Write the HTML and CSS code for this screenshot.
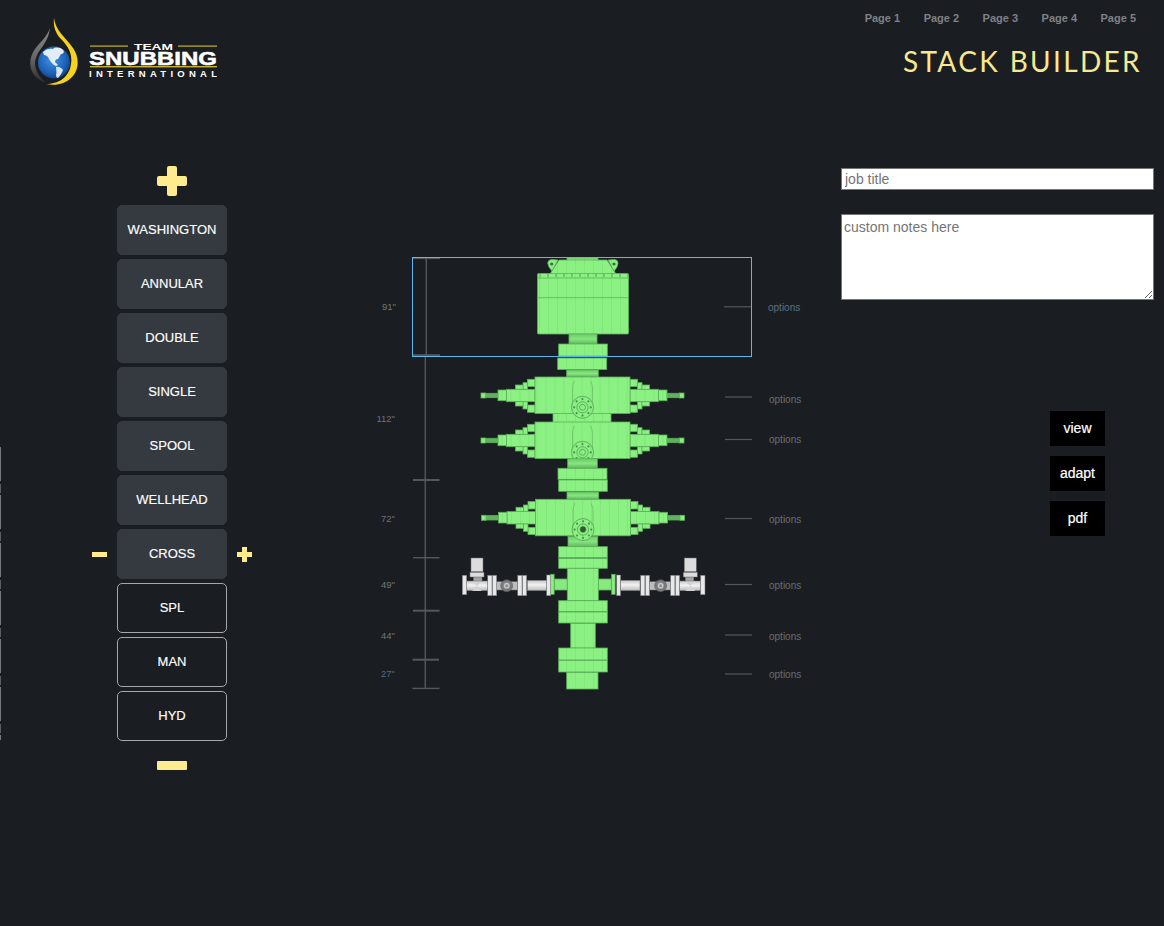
FILE: index.html
```html
<!DOCTYPE html>
<html lang="en">
<head>
<meta charset="utf-8">
<title>Stack Builder</title>
<link rel="stylesheet" href="styles.css">
</head>
<body>
<div class="edge"></div>
<header class="top">
  <svg class="logo" width="187" height="67" viewBox="30 18 187 67" role="img" aria-label="Team Snubbing International">
    <defs>
      <radialGradient id="globe" cx="0.45" cy="0.4" r="0.65">
        <stop offset="0" stop-color="#3f93e6"/>
        <stop offset="0.7" stop-color="#1b5fb4"/>
        <stop offset="1" stop-color="#0d3a78"/>
      </radialGradient>
      <linearGradient id="grayDrop" x1="0" y1="0" x2="0" y2="1">
        <stop offset="0" stop-color="#8a8a8a"/>
        <stop offset="0.55" stop-color="#666"/>
        <stop offset="1" stop-color="#2a2b2d"/>
      </linearGradient>
    </defs>
    <path d="M54 18C55 30 66 38 73 48C80 58 79 71 71 78C65 84 56 86 46 84C58 84 69 78 71 64C73 52 66 44 60 38C56 33 53 27 54 18Z" fill="#f6d21f"/>
    <path d="M50 28C47 37 40 42 35 49C28 59 29 71 36 77C39 80 43 82 47 83C41 79 36 73 35 64C35 57 39 51 43 46C46 41 49 36 50 28Z" fill="url(#grayDrop)"/>
    <circle cx="54" cy="62.5" r="16" fill="url(#globe)"/>
    <path d="M43 52C46 49 50 48 53 49C55 47 60 47 63 50C65 52 63 54 61 54C60 56 59 57 58 59C56 59 55 60 55 62C56 63 57 64 58 65L56 66C53 65 51 62 49 59C48 56 46 55 44 55Z" fill="#e4edf6"/>
    <path d="M56 67C58 66 62 68 63 70C62 73 60 76 58 78C57 78 56 77 56 75C57 72 56 70 56 67Z" fill="#d5e2f0"/>
    <rect x="90" y="45.5" width="38" height="1.2" fill="#c9b32c"/>
    <rect x="178" y="45.5" width="39" height="1.2" fill="#c9b32c"/>
    <rect x="90" y="66" width="127" height="1.4" fill="#c9b32c"/>
    <text class="logo-team" x="134" y="49.5" textLength="39" lengthAdjust="spacingAndGlyphs">TEAM</text>
    <text class="logo-snub" x="89" y="64.5" textLength="128" lengthAdjust="spacingAndGlyphs">SNUBBING</text>
    <text class="logo-intl" x="89" y="76.5" textLength="128">INTERNATIONAL</text>
  </svg>
  <div class="top-right">
    <nav class="pages">
      <a class="page-link">Page 1</a>
      <a class="page-link">Page 2</a>
      <a class="page-link">Page 3</a>
      <a class="page-link">Page 4</a>
      <a class="page-link">Page 5</a>
    </nav>
    <h1 class="title">STACK BUILDER</h1>
  </div>
</header>

<main class="main">
  <aside class="stack-menu">
    <svg class="icon-plus-lg" width="30" height="30" viewBox="0 0 30 30"><path d="M10 2a2 2 0 0 1 2-2h6a2 2 0 0 1 2 2v8h8a2 2 0 0 1 2 2v6a2 2 0 0 1-2 2h-8v8a2 2 0 0 1-2 2h-6a2 2 0 0 1-2-2v-8H2a2 2 0 0 1-2-2v-6a2 2 0 0 1 2-2h8Z"/></svg>
    <div class="menu-list">
      <button class="part part-solid">WASHINGTON</button>
      <button class="part part-solid">ANNULAR</button>
      <button class="part part-solid">DOUBLE</button>
      <button class="part part-solid">SINGLE</button>
      <button class="part part-solid">SPOOL</button>
      <button class="part part-solid">WELLHEAD</button>
      <div class="part-row">
        <span class="icon-minus-sm"></span>
        <button class="part part-solid">CROSS</button>
        <svg class="icon-plus-sm" width="15" height="15" viewBox="0 0 15 15"><path d="M5 0h5v5h5v5h-5v5H5v-5H0V5h5Z"/></svg>
      </div>
      <button class="part part-outline">SPL</button>
      <button class="part part-outline">MAN</button>
      <button class="part part-outline">HYD</button>
    </div>
    <span class="icon-minus-lg"></span>
  </aside>

  <svg class="stack" width="450" height="450" viewBox="360 250 450 450" role="img" aria-label="Stack diagram">
    <defs>
      <pattern id="hatch" width="9" height="12" patternUnits="userSpaceOnUse">
        <rect width="9" height="12" fill="#8bf183"/>
        <rect x="8" width="1" height="12" fill="#83e67b"/>
      </pattern>
      <linearGradient id="neck" x1="0" y1="0" x2="0" y2="1">
        <stop offset="0" stop-color="#6fca6b"/>
        <stop offset="0.5" stop-color="#84e67d"/>
        <stop offset="1" stop-color="#62b65f"/>
      </linearGradient>
      <linearGradient id="steel" x1="0" y1="0" x2="0" y2="1">
        <stop offset="0" stop-color="#c8c8c8"/>
        <stop offset="0.45" stop-color="#f2f2f2"/>
        <stop offset="1" stop-color="#b8b8b8"/>
      </linearGradient>
      <filter id="soft" x="-5%" y="-5%" width="110%" height="110%">
        <feGaussianBlur stdDeviation="0.4"/>
      </filter>
      <g id="side">
        <rect x="47.5" y="12.3" width="28.5" height="12.4"/>
        <rect x="76" y="13" width="8.5" height="10.7"/>
        <rect x="84.5" y="16.3" width="13" height="4.4" fill="#5fb25c"/>
        <rect x="97" y="16" width="4.5" height="5"/>
        <rect x="47.5" y="2.3" width="7.5" height="7.4"/>
        <rect x="55" y="5.7" width="4.5" height="6.6"/>
        <rect x="59.5" y="8" width="7.5" height="4.3"/>
        <rect x="47.5" y="28" width="7.5" height="7.3"/>
        <rect x="55" y="24.7" width="4.5" height="7.3"/>
        <rect x="59.5" y="24.7" width="7.5" height="4.3"/>
      </g>
      <g id="bolts" fill="#4c8f4c" stroke="none">
        <circle cx="8.3" cy="0" r="1.1"/><circle cx="5.9" cy="5.9" r="1.1"/><circle cx="0" cy="8.3" r="1.1"/><circle cx="-5.9" cy="5.9" r="1.1"/>
        <circle cx="-8.3" cy="0" r="1.1"/><circle cx="-5.9" cy="-5.9" r="1.1"/><circle cx="0" cy="-8.3" r="1.1"/><circle cx="5.9" cy="-5.9" r="1.1"/>
      </g>
      <g id="bop">
        <use href="#side"/>
        <use href="#side" transform="scale(-1,1)"/>
        <rect x="-47.5" y="0" width="95" height="36.5"/>
        <path d="M-10 27V12C-10 8-9 6-8 4M10 27V12C10 8 9 6 8 4" fill="none" stroke="#6ac267"/>
        <circle cx="0" cy="30.3" r="11" stroke="#569c54" stroke-width="0.8"/>
        <use href="#bolts" transform="translate(0 30.3)"/>
        <circle cx="0" cy="30.3" r="5.6" fill="none" stroke="#569c54" stroke-width="0.8"/>
        <circle cx="0" cy="30.3" r="3" fill="none" stroke="#569c54" stroke-width="0.8"/>
      </g>
      <g id="valve">
        <rect x="546.7" y="575" width="4" height="20.7" fill="#e8e8e8"/>
        <rect x="527.3" y="580.3" width="19.4" height="10.4"/>
        <rect x="517.7" y="575.3" width="4.3" height="20.4" fill="#e8e8e8"/>
        <rect x="522.4" y="575.3" width="4.3" height="20.4" fill="#e8e8e8"/>
        <rect x="496.7" y="581.7" width="21" height="8.3" fill="#bdbdbd"/>
        <rect x="487.7" y="575.3" width="4.3" height="20.4" fill="#e8e8e8"/>
        <rect x="492.4" y="575.3" width="4.3" height="20.4" fill="#e8e8e8"/>
        <rect x="466.7" y="581" width="21" height="9.7"/>
        <path d="M472 581h10l-5 5l5 5h-10l5-5Z" fill="#d2d2d2" stroke="none"/>
        <rect x="462.3" y="575.3" width="4.4" height="19.4" fill="#e8e8e8"/>
        <rect x="473.5" y="577" width="8.5" height="4" fill="#a5a5a5"/>
        <rect x="471" y="558" width="12" height="13.7" fill="#dcdcdc"/>
        <rect x="470" y="572.3" width="14" height="4.7" fill="#dcdcdc"/>
        <circle cx="506.7" cy="585.7" r="6" fill="#77797b" stroke="#55575a"/>
        <circle cx="506.7" cy="585.7" r="3.4" fill="#c8c8c8" stroke="#5c5e60"/>
        <circle cx="506.7" cy="585.7" r="1.5" fill="#8b8d8f" stroke="none"/>
      </g>
    </defs>

    <g class="ruler">
      <line x1="426.3" y1="258" x2="426.3" y2="356"/>
      <line x1="425.3" y1="356" x2="425.3" y2="689"/>
      <line x1="413" y1="258.4" x2="440" y2="258.4"/>
      <line class="tick-thick" x1="413" y1="355.2" x2="440" y2="355.2"/>
      <line class="tick-thick" x1="413" y1="480" x2="439.5" y2="480"/>
      <line x1="413" y1="557.7" x2="439.5" y2="557.7"/>
      <line class="tick-thick" x1="413" y1="610.7" x2="439.5" y2="610.7"/>
      <line class="tick-thick" x1="412.5" y1="659.7" x2="439" y2="659.7"/>
      <line x1="412.5" y1="688.4" x2="439.5" y2="688.4"/>
    </g>

    <g class="leaders">
      <line x1="724" y1="306.8" x2="751" y2="306.8"/>
      <line x1="725" y1="397" x2="752" y2="397"/>
      <line x1="725" y1="439.5" x2="752" y2="439.5"/>
      <line x1="725" y1="518.5" x2="752" y2="518.5"/>
      <line x1="725" y1="584.5" x2="752" y2="584.5"/>
      <line x1="725" y1="635" x2="752" y2="635"/>
      <line x1="725" y1="674" x2="752" y2="674"/>
    </g>

    <text class="size size-olive" x="396" y="310" text-anchor="end">91"</text>
    <text class="size size-slate" x="395" y="422" text-anchor="end">112"</text>
    <text class="size size-slate" x="395" y="522" text-anchor="end">72"</text>
    <text class="size size-olive" x="395" y="588" text-anchor="end">49"</text>
    <text class="size size-olive" x="395" y="639" text-anchor="end">44"</text>
    <text class="size size-blue" x="395" y="677" text-anchor="end">27"</text>

    <text class="opt opt-blue" x="768" y="310.5">options</text>
    <text class="opt" x="769" y="402.5">options</text>
    <text class="opt" x="769" y="442.5">options</text>
    <text class="opt" x="769" y="522.5">options</text>
    <text class="opt" x="769" y="588.5">options</text>
    <text class="opt" x="769" y="639.5">options</text>
    <text class="opt" x="769" y="677.5">options</text>

    <g filter="url(#soft)" fill="url(#hatch)" stroke="#5cb159" stroke-width="0.8">
      <!-- annular -->
      <rect x="567" y="258" width="31" height="2.2"/>
      <path d="M559 260H607L616 274H550Z"/>
      <path d="M547.7 263Q548 259.5 552 259.5L558 260L552 271Q548 267 547.7 263Z"/>
      <path d="M618 263Q618 259.5 614 259.5L608 260L614 271Q618 267 618 263Z"/>
      <circle cx="551.7" cy="264" r="1.6" fill="#3c6d3c" stroke="none"/>
      <circle cx="614" cy="264" r="1.6" fill="#3c6d3c" stroke="none"/>
      <rect x="537.5" y="273.5" width="91" height="60.5" rx="1"/>
      <line x1="538" y1="297.7" x2="628" y2="297.7"/>
      <line x1="538" y1="278" x2="628" y2="278"/>
      <line x1="539" y1="275.8" x2="628" y2="275.8" stroke="#6fc76b" stroke-width="3.6" stroke-dasharray="2 6"/>
      <rect x="569" y="334" width="28" height="10" fill="url(#neck)"/>
      <rect x="558.7" y="344" width="48.6" height="12"/>
      <rect x="557.7" y="358" width="49" height="11.5"/>
      <rect x="566.7" y="370" width="31.6" height="7" fill="url(#neck)"/>

      <!-- double -->
      <rect x="553" y="412" width="58" height="12"/>
      <use href="#bop" transform="translate(582.5 377)"/>
      <use href="#bop" transform="translate(582.5 422)"/>

      <rect x="567.7" y="458.7" width="29.6" height="9.6" fill="url(#neck)"/>
      <rect x="558" y="468.3" width="49" height="11"/>
      <rect x="558.7" y="480" width="48.6" height="11.3"/>
      <rect x="567" y="492" width="31.7" height="7.3" fill="url(#neck)"/>

      <!-- single -->
      <rect x="568" y="536.3" width="29.7" height="10.4" fill="url(#neck)"/>
      <use href="#bop" transform="translate(583 499.3)"/>

      <!-- spool and cross -->
      <rect x="558.7" y="546.7" width="48.6" height="11"/>
      <rect x="558.7" y="558.3" width="48.6" height="10"/>
      <rect x="554.3" y="579" width="13" height="11" fill="#86ea7e"/>
      <rect x="598.3" y="579" width="13" height="11" fill="#86ea7e"/>
      <rect x="550.7" y="574.3" width="3.4" height="20"/>
      <rect x="611.7" y="574.3" width="3.4" height="20"/>
      <rect x="567.3" y="568.3" width="31" height="32.4"/>
      <rect x="558.7" y="600.7" width="48.6" height="11"/>
      <rect x="558.7" y="612" width="48.6" height="11"/>
      <rect x="570.7" y="623.3" width="24.6" height="24.7"/>
      <rect x="558.7" y="648" width="48.6" height="12"/>
      <rect x="558.7" y="660.3" width="48.6" height="11.7"/>
      <rect x="566.7" y="672.3" width="31.3" height="16.7"/>
    </g>
    <g filter="url(#soft)" fill="url(#steel)" stroke="#6d6f71" stroke-width="0.5">
      <use href="#valve"/>
      <use href="#valve" transform="translate(1167.3 0) scale(-1 1)"/>
    </g>
    <circle class="hub" cx="583" cy="529.3" r="2.8"/>
    <rect class="selection" x="412.5" y="257.5" width="339" height="99"/>
  </svg>

  <section class="side-panel">
    <input class="field job" type="text" placeholder="job title">
    <textarea class="field notes" placeholder="custom notes here"></textarea>
    <div class="actions">
      <button class="action">view</button>
      <button class="action">adapt</button>
      <button class="action">pdf</button>
    </div>
  </section>
</main>
</body>
</html>
```
FILE: styles.css
```css
* { box-sizing: border-box; }

html, body {
  margin: 0;
  height: 926px;
  overflow: hidden;
}

body {
  position: relative;
  background: #1a1d22;
  font-family: "Liberation Sans", Arial, sans-serif;
  color: #fff;
}

.edge {
  position: absolute;
  left: 0;
  top: 447px;
  width: 1px;
  height: 293px;
  background: repeating-linear-gradient(#77797c 0 34px, #1a1d22 34px 37px, #5c5e61 37px 46px, #1a1d22 46px 48px);
}

.top {
  display: flex;
  justify-content: space-between;
  height: 100px;
}

.logo {
  margin: 18px 0 0 30px;
  display: block;
}

.logo-team, .logo-snub, .logo-intl {
  fill: #fff;
  font-family: "Liberation Sans", Arial, sans-serif;
  font-weight: 700;
}
.logo-team { font-size: 8.5px; }
.logo-snub { font-size: 18px; stroke: #fff; stroke-width: 0.5px; }
.logo-intl { font-size: 9.5px; }

.top-right {
  display: flex;
  flex-direction: column;
  align-items: flex-end;
  padding-top: 12px;
}

.pages {
  display: flex;
  gap: 23.5px;
  padding-right: 28px;
}

.page-link {
  color: #808285;
  font-size: 11px;
  font-weight: 700;
  line-height: 13px;
}

.title {
  margin: 14px 22px 0 0;
  color: #f8e88e;
  font-family: Lato, sans-serif;
  font-size: 28px;
  font-weight: 400;
  letter-spacing: 2.35px;
  line-height: 44px;
}

.main {
  display: flex;
  align-items: flex-start;
}

.stack-menu {
  display: flex;
  flex-direction: column;
  align-items: center;
  width: 160px;
  margin-left: 92px;
  padding-top: 66px;
}

.icon-plus-lg { fill: #fdeb8e; display: block; }
.icon-plus-sm { fill: #fdeb8e; display: block; }

.menu-list {
  display: flex;
  flex-direction: column;
  align-items: center;
  gap: 4px;
  margin-top: 9px;
}

.part-row {
  display: flex;
  align-items: center;
  gap: 10px;
}

.part {
  width: 110px;
  height: 50px;
  border-radius: 5px;
  color: #fff;
  font-family: "Liberation Sans", Arial, sans-serif;
  font-size: 13px;
  -webkit-text-stroke: 0.15px #fff;
  padding: 0 0 2px;
}

.part-solid {
  background: #343a40;
  border: 1px solid #343a40;
}

.part-outline {
  background: transparent;
  border: 1px solid #a5a7aa;
}

.icon-minus-sm {
  display: block;
  width: 15px;
  height: 5px;
  background: #fdeb8e;
}

.icon-minus-lg {
  display: block;
  width: 30px;
  height: 9px;
  margin-top: 20px;
  border-radius: 1px;
  background: #fdeb8e;
}

.stack {
  display: block;
  flex: none;
  margin: 150px 0 0 108px;
}

.ruler line {
  stroke: #55585b;
  stroke-width: 1.4px;
}

.ruler .tick-thick {
  stroke-width: 2px;
}

.leaders line {
  stroke: #55585b;
  stroke-width: 1.2px;
}

.size {
  font-size: 9.5px;
  font-family: "Liberation Sans", Arial, sans-serif;
}
.size-olive { fill: #74786a; }
.size-slate { fill: #667182; }
.size-blue { fill: #4f6b8e; }

.opt {
  fill: #6c6e70;
  font-size: 10px;
  font-family: "Liberation Sans", Arial, sans-serif;
}
.opt-blue { fill: #5b7280; }

.hub { fill: #2e5a2e; }

.selection {
  fill: none;
  stroke: #5fb6ea;
  stroke-width: 1px;
}

.side-panel {
  display: flex;
  flex-direction: column;
  width: 313px;
  margin-left: 31px;
  padding-top: 68px;
}

.field {
  display: block;
  width: 313px;
  margin: 0;
  border: 1px solid #767676;
  background: #fff;
  font-family: "Liberation Sans", Arial, sans-serif;
  font-size: 14px;
}

.job {
  height: 22px;
  padding: 1px 3px;
}

.notes {
  height: 86px;
  margin-top: 24px;
  padding: 4px 2px 2px;
}

.actions {
  display: flex;
  flex-direction: column;
  align-items: flex-end;
  gap: 10px;
  margin-top: 111px;
  padding-right: 49px;
}

.action {
  width: 55px;
  height: 35px;
  padding: 0 0 2px;
  border: 0;
  background: #000;
  color: #fff;
  font-family: "Liberation Sans", Arial, sans-serif;
  font-size: 14px;
  -webkit-text-stroke: 0.2px #fff;
}
```
